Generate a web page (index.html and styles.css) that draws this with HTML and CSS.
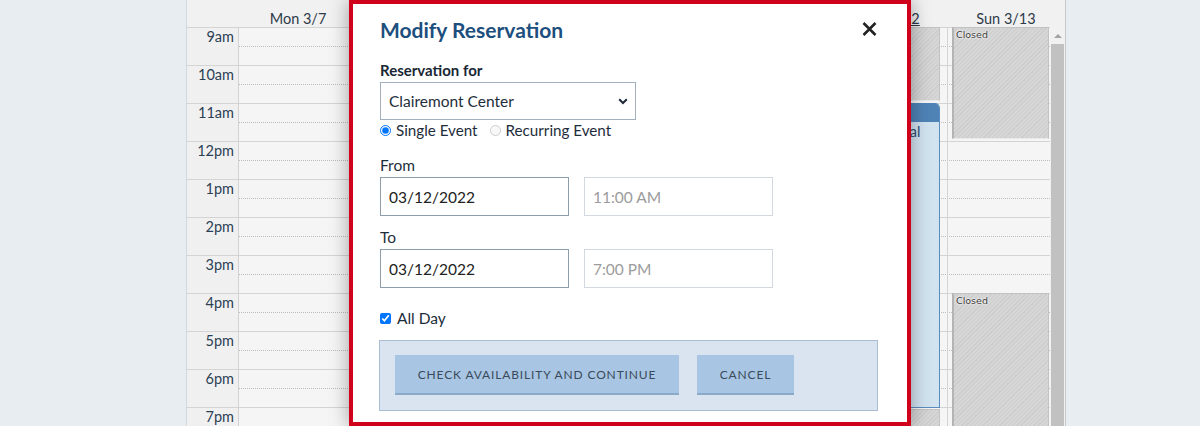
FILE: index.html
```html
<!DOCTYPE html>
<html>
<head>
<meta charset="utf-8">
<link rel="stylesheet" href="styles.css">
</head>
<body>
<div class="page">
  <div class="cal">
    <div class="cal-head">
      <div class="hcell"></div>
      <div class="hcell">Mon 3/7</div>
      <div class="hcell"></div>
      <div class="hcell"></div>
      <div class="hcell"></div>
      <div class="hcell"></div>
      <div class="hcell"><span class="today">Sat 3/12</span></div>
      <div class="hcell">Sun 3/13</div>
    </div>
    <div class="cal-body">
      <div class="cal-main">
        <div class="slot"><div class="tlabel">9am</div><div class="lane"><div class="half"></div><div class="half dotted"></div></div></div>
        <div class="slot"><div class="tlabel">10am</div><div class="lane"><div class="half"></div><div class="half dotted"></div></div></div>
        <div class="slot"><div class="tlabel">11am</div><div class="lane"><div class="half"></div><div class="half dotted"></div></div></div>
        <div class="slot"><div class="tlabel">12pm</div><div class="lane"><div class="half"></div><div class="half dotted"></div></div></div>
        <div class="slot"><div class="tlabel">1pm</div><div class="lane"><div class="half"></div><div class="half dotted"></div></div></div>
        <div class="slot"><div class="tlabel">2pm</div><div class="lane"><div class="half"></div><div class="half dotted"></div></div></div>
        <div class="slot"><div class="tlabel">3pm</div><div class="lane"><div class="half"></div><div class="half dotted"></div></div></div>
        <div class="slot"><div class="tlabel">4pm</div><div class="lane"><div class="half"></div><div class="half dotted"></div></div></div>
        <div class="slot"><div class="tlabel">5pm</div><div class="lane"><div class="half"></div><div class="half dotted"></div></div></div>
        <div class="slot"><div class="tlabel">6pm</div><div class="lane"><div class="half"></div><div class="half dotted"></div></div></div>
        <div class="slot"><div class="tlabel">7pm</div><div class="lane"><div class="half"></div><div class="half dotted"></div></div></div>

        <div class="cols">
          <div class="col first"></div>
          <div class="col"></div>
          <div class="col"></div>
          <div class="col"></div>
          <div class="col"></div>
          <div class="col">
            <div class="ev closed sat-a"></div>
            <div class="ev booked"><div class="ev-top"></div><div class="ev-title">Private Rental</div></div>
            <div class="ev closed sat-b"></div>
          </div>
          <div class="col">
            <div class="ev closed sun-a"><span class="closed-lbl">Closed</span></div>
            <div class="ev closed sun-b"><span class="closed-lbl">Closed</span></div>
          </div>
        </div>
      </div>
      <div class="scrollbar">
        <div class="sb-arrow"></div>
        <div class="sb-thumb"></div>
      </div>
    </div>
  </div>

  <div class="modal">
    <div class="m-head">
      <h2 class="m-title">Modify Reservation</h2>
      <svg class="m-close" width="15" height="14" viewBox="0 0 15 14"><path d="M1.5 1 L13.5 13 M13.5 1 L1.5 13" stroke="#222" stroke-width="2.6" stroke-linecap="butt" fill="none"/></svg>
    </div>
    <div class="lbl-bold">Reservation for</div>
    <div class="select">
      <span>Clairemont Center</span>
      <svg width="10" height="7" viewBox="0 0 10 7"><path d="M1.2 1.2 L5 5 L8.8 1.2" stroke="#1e2b38" stroke-width="2" fill="none"/></svg>
    </div>
    <div class="radios">
      <label class="opt"><input type="radio" name="t" checked> Single Event</label>
      <label class="opt"><input type="radio" name="t" disabled> Recurring Event</label>
    </div>
    <div class="lbl from">From</div>
    <div class="pair">
      <input class="field" type="text" value="03/12/2022">
      <input class="field muted" type="text" value="11:00 AM" disabled>
    </div>
    <div class="lbl to">To</div>
    <div class="pair">
      <input class="field" type="text" value="03/12/2022">
      <input class="field muted" type="text" value="7:00 PM" disabled>
    </div>
    <label class="allday"><input type="checkbox" checked> All Day</label>
    <div class="m-foot">
      <button class="btn wide">Check Availability and Continue</button>
      <button class="btn narrow">Cancel</button>
    </div>
  </div>
</div>
</body>
</html>
```

FILE: styles.css
```css
* { box-sizing: border-box; }
html, body { margin: 0; padding: 0; }
body {
  background: #e8edf1;
  font-family: Lato, "Noto Sans", sans-serif;
  color: #1e2d3b;
  width: 1200px;
  height: 426px;
  overflow: hidden;
}
.page { position: relative; width: 1200px; height: 426px; }

/* calendar */
.cal {
  margin-left: 186px;
  width: 880px;
  height: 426px;
  border-left: 1px solid #d3d8dc;
  border-right: 1px solid #c9c9c9;
  background: #f3f3f3;
  overflow: hidden;
}
.cal-head {
  display: grid;
  grid-template-columns: 52px repeat(6, 118px) 1fr;
  height: 27px;
  background: #f1f1f1;
}
.hcell {
  text-align: center;
  font-size: 14.5px;
  line-height: 17px;
  padding-top: 10px;
  color: #2e3a48;
  white-space: nowrap;
}
.today { text-decoration: underline; padding-left: 8px; }
.cal-body { display: flex; height: 399px; }
.cal-main { position: relative; flex: 1; background: #f5f5f5; }
.slot {
  display: flex;
  height: 38px;
  border-top: 1px solid #d4d4d4;
}
.tlabel {
  width: 52px;
  background: #f0f0f0;
  border-right: 1px solid #d2d2d2;
  text-align: right;
  padding-right: 4px;
  font-size: 14.5px;
  line-height: 18px;
  color: #2b3f55;
}
.lane { flex: 1; display: flex; flex-direction: column; }
.half { flex: 1; }
.half.dotted { border-top: 1px dotted #bdbdbd; }

.cols {
  position: absolute;
  top: 0; bottom: 0; left: 52px; right: 0;
  display: grid;
  grid-template-columns: repeat(6, 118px) 1fr;
}
.col { position: relative; border-left: 1px solid #d4d4d4; }
.col.first { border-left: none; }

.ev { position: absolute; }
.closed {
  background: repeating-linear-gradient(135deg, #d6d6d6 0 2px, #cdcdcd 2px 3px);
  border: 1px solid #c2c2c2;
  border-left: 2px solid #b4b4b4;
  border-bottom: 1px solid #e9e9e9;
}
.sat-a { top: 0; height: 74px; left: 3px; right: 7px; }
.sat-b { top: 382px; height: 60px; left: 3px; right: 7px; }
.sun-a { top: 0; height: 112px; left: 4px; right: 1px; }
.sun-b { top: 266px; height: 200px; left: 4px; right: 1px; }
.closed-lbl {
  display: block;
  font-family: "DejaVu Sans", Verdana, sans-serif;
  font-size: 9.5px;
  line-height: 12px;
  color: #3a3a3a;
  padding-left: 2px;
  padding-top: 1px;
  text-shadow: 0 0 2px #fff, 0 0 2px #fff;
}
.booked {
  top: 76px; height: 305px; left: 3px; right: 7px;
  background: #d2e3f0;
  border: 1px solid #5b8cbd;
  border-top: none;
  border-radius: 0 5px 0 0;
  overflow: hidden;
}
.ev-top { height: 19px; background: #4f83b6; }
.ev-title {
  font-size: 14.5px;
  line-height: 18px;
  color: #2a4d70;
  margin-left: -2px;
  padding-top: 1px;
  white-space: nowrap;
}

.scrollbar { width: 15px; background: #f1f1f1; display: flex; flex-direction: column; align-items: center; }
.sb-arrow {
  margin-top: 7px;
  width: 0; height: 0;
  border-left: 4px solid transparent;
  border-right: 4px solid transparent;
  border-bottom: 4px solid #a3a3a3;
}
.sb-thumb { margin-top: 6px; width: 13px; flex: 1; background: #c1c1c1; }

/* modal */
.modal {
  position: absolute;
  left: 349px; top: 0;
  width: 562px; height: 426px;
  background: #fff;
  border: 4px solid #d0021b;
  box-shadow: 0 0 18px rgba(0,0,0,0.35);
  padding: 0 29px 0 27px;
}
.m-head { display: flex; justify-content: space-between; align-items: flex-start; margin-top: 14px; }
.m-title {
  margin: 0;
  font-size: 21px;
  line-height: 24px;
  font-weight: 700;
  color: #1d4f7e;
}
.m-close { margin-top: 4px; margin-right: 1px; }
.lbl-bold {
  margin-top: 18px;
  font-size: 15px;
  line-height: 20px;
  font-weight: 700;
  color: #1a2835;
}
.select {
  margin-top: 2px;
  width: 256px; height: 38px;
  border: 1px solid #a3b1bf;
  display: flex; align-items: center; justify-content: space-between;
  padding: 0 7px 0 8px;
  font-size: 15.5px;
  color: #1e2d3b;
}
.radios { display: flex; gap: 12px; height: 20px; align-items: center; }
.opt { display: flex; align-items: center; gap: 5px; font-size: 15.2px; line-height: 20px; color: #1e2d3b; }
.opt input { margin: 0; width: 11px; height: 11px; }
.lbl {
  font-size: 15.5px;
  line-height: 20px;
  color: #1e2d3b;
}
.lbl.from { margin-top: 15px; }
.lbl.to { margin-top: 11px; }
.pair { display: flex; gap: 15px; margin-top: 2px; }
.field {
  width: 189px; height: 39px;
  border: 1px solid #8e9dab;
  border-radius: 0;
  padding: 0 8px;
  font-family: inherit;
  font-size: 15.5px;
  color: #222;
  background: #fff;
  outline: none;
  margin: 0;
}
.field.muted { border-color: #d2d8de; color: #9c9c9c; }
.allday {
  margin-top: 20px;
  display: flex; align-items: center; gap: 6px;
  height: 20px;
  font-size: 15.5px;
  color: #1e2d3b;
}
.allday input { margin: 0; width: 11px; height: 11px; }
.m-foot {
  margin-top: 12px;
  margin-left: -1px;
  width: 499px; height: 71px;
  background: #dae4f0;
  border: 1px solid #aabdd3;
  padding: 14px 15px;
  display: flex; gap: 18px;
}
.btn {
  height: 40px;
  border: none;
  border-bottom: 2px solid #8ba9c9;
  background: #a8c6e3;
  font-family: inherit;
  font-size: 12px;
  letter-spacing: 0.85px;
  text-transform: uppercase;
  color: #3a4a5b;
  padding: 0;
  margin: 0;
  white-space: nowrap;
  text-align: center;
}
.btn.wide { width: 284px; }
.btn.narrow { width: 97px; }
```
